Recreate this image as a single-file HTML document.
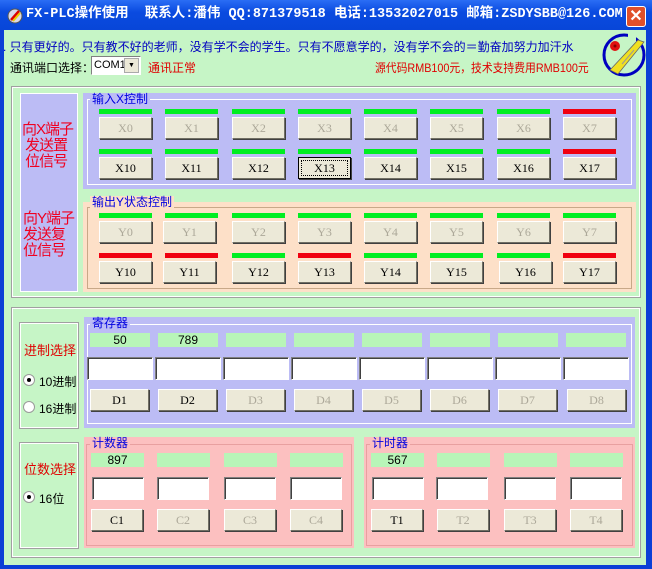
<!DOCTYPE html>
<html><head><meta charset="utf-8"><style>
*{margin:0;padding:0;box-sizing:border-box}
body{width:652px;height:569px;overflow:hidden;background:#0b3fd6;font-family:"Liberation Sans","Noto Sans CJK SC",sans-serif;position:relative}
.a{position:absolute}
#title{left:0;top:0;width:652px;height:30px;background:linear-gradient(#2a6df5,#0a4be0 40%,#0846d8);color:#fff;font:bold 13.5px "Liberation Mono","Noto Sans CJK SC",monospace;line-height:30px;white-space:nowrap}
#client{left:4px;top:30px;width:642px;height:535px;background:#c6f5c6}
.b{position:absolute;width:53px;height:22px;background:#ece9d8;border:1px solid;border-color:#fff #716f64 #716f64 #fff;box-shadow:1px 1px 0 #404040;font:12px "Liberation Serif","Noto Serif CJK SC",serif;text-align:center;line-height:20px;color:#000}
.d{color:#aca899}
.g{position:absolute;height:5px;background:#00ee22}
.r{position:absolute;height:5px;background:#f00010}
.gt{position:absolute;font:12px "Liberation Sans","Noto Sans CJK SC",sans-serif;color:#0000e0;padding:0 2px;line-height:13px}
.fr{position:absolute;border:1px solid #fff;outline:1px solid #a0a0a0}
.v{position:absolute;height:14px;background:#b8f5b8;font:12px "Liberation Sans",sans-serif;text-align:center;line-height:14px}
.t{position:absolute;height:23px;background:#fff;border:1px solid;border-color:#808080 #fff #fff #808080;box-shadow:inset 1px 1px 0 #404040}
.rad{position:absolute;width:12px;height:12px;border-radius:50%;background:#fff;border:1px solid #9a9a9a}
.rad.on::after{content:"";position:absolute;left:3px;top:3px;width:4px;height:4px;border-radius:50%;background:#000}
.lbl{position:absolute;font:12px "Liberation Sans","Noto Sans CJK SC",sans-serif;white-space:nowrap}
</style></head><body>
<div id="title" class="a">
<svg class="a" style="left:7px;top:8px" width="16" height="16" viewBox="0 0 16 16"><circle cx="8" cy="8" r="7" fill="#d8d8e8" stroke="#555"/><path d="M4 12 L12 3" stroke="#d00" stroke-width="2.5"/><path d="M6 13 L13 5" stroke="#ec0" stroke-width="2"/></svg>
<span class="a" style="left:26px;top:0">FX-PLC操作使用&nbsp; 联系人:潘伟 QQ:871379518 电话:13532027015 邮箱:ZSDYSBB@126.COM</span>
<div class="a" style="left:626px;top:6px;width:20px;height:21px;background:#e0502a;border:1px solid #fff;border-radius:3px;color:#fff;font:bold 16px 'Liberation Sans';text-align:center;line-height:19px">✕</div>
</div>
<div id="client" class="a"></div>
<div class="lbl" style="left:3px;top:38px;font-size:12px;color:#0000c0">. 只有更好的。只有教不好的老师，没有学不会的学生。只有不愿意学的，没有学不会的＝勤奋加努力加汗水</div>
<div class="lbl" style="left:10px;top:59px;font-size:12px">通讯端口选择：</div>
<div class="a" style="left:91px;top:56px;width:50px;height:19px;background:#fff;border:1px solid;border-color:#808080 #fff #fff #808080;font:11px 'Liberation Sans';line-height:17px;padding-left:2px">COM1<div class="a" style="right:1px;top:1px;width:15px;height:15px;background:#ece9d8;border:1px solid #aaa;font-size:7px;text-align:center;line-height:14px">▼</div></div>
<div class="lbl" style="left:148px;top:59px;font-size:12px;color:#e00000">通讯正常</div>
<div class="lbl" style="left:375px;top:59px;font-size:12px;color:#e00000;transform:scaleX(0.9);transform-origin:0 0">源代码RMB100元，技术支持费用RMB100元</div>
<svg class="a" style="left:600px;top:30px" width="48" height="50" viewBox="0 0 48 50"><circle cx="24" cy="25" r="20" fill="none" stroke="#0000c0" stroke-width="3"/><rect x="28" y="3" width="8" height="8" fill="#c6f5c6"/><circle cx="15" cy="16" r="5" fill="#e01010"/><circle cx="15" cy="16" r="1.5" fill="#800"/><path d="M10 40 L38 10 L44 12 L18 44 Z" fill="#f0e020" stroke="#666" stroke-width="0.8"/><path d="M22 34 L34 20" stroke="#999" stroke-width="1"/></svg>

<div class="fr" style="left:12px;top:87px;width:628px;height:210px"></div>
<div class="a" style="left:20px;top:93px;width:58px;height:199px;background:#bcbcf5;border:1px solid #fff"></div>
<div class="lbl" style="left:22px;top:122px;color:#f00020;font-size:15px;line-height:16px;letter-spacing:-1px">向X端子<br>&nbsp;发送置<br>&nbsp;位信号</div>
<div class="lbl" style="left:23px;top:211px;color:#f00020;font-size:15px;line-height:16px;letter-spacing:-1px">向Y端子<br>发送复<br>位信号</div>
<div class="a" style="left:83px;top:93px;width:553px;height:96px;background:#bcbcf5"></div>
<div class="fr" style="left:87px;top:99px;width:545px;height:86px;outline:none;border-color:#fff"></div>
<div class="gt" style="left:90px;top:93px;background:#bcbcf5">输入X控制</div>
<div class="a" style="left:83px;top:202px;width:553px;height:90px;background:#fde0c8"></div>
<div class="fr" style="left:87px;top:207px;width:545px;height:82px;outline:none;border-color:#c8a888"></div>
<div class="gt" style="left:90px;top:196px;background:#fde0c8">输出Y状态控制</div>

<div class="g" style="left:99px;top:109px;width:53px"></div><div class="b d" style="left:99px;top:117px">X0</div>
<div class="g" style="left:165px;top:109px;width:53px"></div><div class="b d" style="left:165px;top:117px">X1</div>
<div class="g" style="left:232px;top:109px;width:53px"></div><div class="b d" style="left:232px;top:117px">X2</div>
<div class="g" style="left:298px;top:109px;width:53px"></div><div class="b d" style="left:298px;top:117px">X3</div>
<div class="g" style="left:364px;top:109px;width:53px"></div><div class="b d" style="left:364px;top:117px">X4</div>
<div class="g" style="left:430px;top:109px;width:53px"></div><div class="b d" style="left:430px;top:117px">X5</div>
<div class="g" style="left:497px;top:109px;width:53px"></div><div class="b d" style="left:497px;top:117px">X6</div>
<div class="r" style="left:563px;top:109px;width:53px"></div><div class="b d" style="left:563px;top:117px">X7</div>

<div class="g" style="left:99px;top:149px;width:53px"></div><div class="b" style="left:99px;top:157px">X10</div>
<div class="g" style="left:165px;top:149px;width:53px"></div><div class="b" style="left:165px;top:157px">X11</div>
<div class="g" style="left:232px;top:149px;width:53px"></div><div class="b" style="left:232px;top:157px">X12</div>
<div class="g" style="left:298px;top:149px;width:53px"></div><div class="b" style="left:298px;top:157px;border:1px solid #000;outline:1px dotted #000;outline-offset:-4px">X13</div>
<div class="g" style="left:364px;top:149px;width:53px"></div><div class="b" style="left:364px;top:157px">X14</div>
<div class="g" style="left:430px;top:149px;width:53px"></div><div class="b" style="left:430px;top:157px">X15</div>
<div class="g" style="left:497px;top:149px;width:53px"></div><div class="b" style="left:497px;top:157px">X16</div>
<div class="r" style="left:563px;top:149px;width:53px"></div><div class="b" style="left:563px;top:157px">X17</div>

<div class="g" style="left:99px;top:213px;width:53px"></div><div class="b d" style="left:99px;top:221px">Y0</div>
<div class="g" style="left:165px;top:213px;width:53px"></div><div class="b d" style="left:163px;top:221px">Y1</div>
<div class="g" style="left:232px;top:213px;width:53px"></div><div class="b d" style="left:232px;top:221px">Y2</div>
<div class="g" style="left:298px;top:213px;width:53px"></div><div class="b d" style="left:298px;top:221px">Y3</div>
<div class="g" style="left:364px;top:213px;width:53px"></div><div class="b d" style="left:364px;top:221px">Y4</div>
<div class="g" style="left:430px;top:213px;width:53px"></div><div class="b d" style="left:430px;top:221px">Y5</div>
<div class="g" style="left:497px;top:213px;width:53px"></div><div class="b d" style="left:497px;top:221px">Y6</div>
<div class="g" style="left:563px;top:213px;width:53px"></div><div class="b d" style="left:563px;top:221px">Y7</div>

<div class="r" style="left:99px;top:253px;width:53px"></div><div class="b" style="left:99px;top:261px">Y10</div>
<div class="r" style="left:165px;top:253px;width:53px"></div><div class="b" style="left:163px;top:261px">Y11</div>
<div class="g" style="left:232px;top:253px;width:53px"></div><div class="b" style="left:232px;top:261px">Y12</div>
<div class="r" style="left:298px;top:253px;width:53px"></div><div class="b" style="left:298px;top:261px">Y13</div>
<div class="g" style="left:364px;top:253px;width:53px"></div><div class="b" style="left:364px;top:261px">Y14</div>
<div class="g" style="left:430px;top:253px;width:53px"></div><div class="b" style="left:430px;top:261px">Y15</div>
<div class="g" style="left:497px;top:253px;width:53px"></div><div class="b" style="left:499px;top:261px">Y16</div>
<div class="r" style="left:563px;top:253px;width:53px"></div><div class="b" style="left:563px;top:261px">Y17</div>

<div class="fr" style="left:12px;top:308px;width:628px;height:249px"></div>
<div class="fr" style="left:20px;top:323px;width:58px;height:105px"></div>
<div class="lbl" style="left:24px;top:340px;color:#e00000;font-size:13px">进制选择</div>
<div class="rad on" style="left:23px;top:374px"></div><div class="lbl" style="left:39px;top:373px">10进制</div>
<div class="rad" style="left:23px;top:401px"></div><div class="lbl" style="left:39px;top:400px">16进制</div>
<div class="fr" style="left:20px;top:443px;width:58px;height:105px"></div>
<div class="lbl" style="left:24px;top:459px;color:#e00000;font-size:13px">位数选择</div>
<div class="rad on" style="left:23px;top:491px"></div><div class="lbl" style="left:39px;top:490px">16位</div>

<div class="a" style="left:84px;top:317px;width:551px;height:111px;background:#bcbcf5"></div>
<div class="fr" style="left:87px;top:324px;width:545px;height:100px;outline:none"></div>
<div class="gt" style="left:90px;top:317px;background:#bcbcf5">寄存器</div>
<div class="v" style="left:90px;top:333px;width:60px">50</div>
<div class="v" style="left:158px;top:333px;width:60px">789</div>
<div class="v" style="left:226px;top:333px;width:60px"></div>
<div class="v" style="left:294px;top:333px;width:60px"></div>
<div class="v" style="left:362px;top:333px;width:60px"></div>
<div class="v" style="left:430px;top:333px;width:60px"></div>
<div class="v" style="left:498px;top:333px;width:60px"></div>
<div class="v" style="left:566px;top:333px;width:60px"></div>
<div class="t" style="left:87px;top:357px;width:66px"></div>
<div class="t" style="left:155px;top:357px;width:66px"></div>
<div class="t" style="left:223px;top:357px;width:66px"></div>
<div class="t" style="left:291px;top:357px;width:66px"></div>
<div class="t" style="left:359px;top:357px;width:66px"></div>
<div class="t" style="left:427px;top:357px;width:66px"></div>
<div class="t" style="left:495px;top:357px;width:66px"></div>
<div class="t" style="left:563px;top:357px;width:66px"></div>
<div class="b" style="left:90px;top:389px;width:59px">D1</div>
<div class="b" style="left:158px;top:389px;width:59px">D2</div>
<div class="b d" style="left:226px;top:389px;width:59px">D3</div>
<div class="b d" style="left:294px;top:389px;width:59px">D4</div>
<div class="b d" style="left:362px;top:389px;width:59px">D5</div>
<div class="b d" style="left:430px;top:389px;width:59px">D6</div>
<div class="b d" style="left:498px;top:389px;width:59px">D7</div>
<div class="b d" style="left:567px;top:389px;width:59px">D8</div>

<div class="a" style="left:84px;top:437px;width:270px;height:111px;background:#fcc0c0"></div>
<div class="fr" style="left:86px;top:444px;width:266px;height:102px;outline:none;border-color:#e8a0a0"></div>
<div class="gt" style="left:90px;top:437px;background:#fcc0c0">计数器</div>
<div class="a" style="left:364px;top:437px;width:271px;height:111px;background:#fcc0c0"></div>
<div class="fr" style="left:366px;top:444px;width:267px;height:102px;outline:none;border-color:#e8a0a0"></div>
<div class="gt" style="left:370px;top:437px;background:#fcc0c0">计时器</div>

<div class="v" style="left:91px;top:453px;width:53px">897</div>
<div class="v" style="left:157px;top:453px;width:53px"></div>
<div class="v" style="left:224px;top:453px;width:53px"></div>
<div class="v" style="left:290px;top:453px;width:53px"></div>
<div class="t" style="left:92px;top:477px;width:52px"></div>
<div class="t" style="left:157px;top:477px;width:52px"></div>
<div class="t" style="left:224px;top:477px;width:52px"></div>
<div class="t" style="left:290px;top:477px;width:52px"></div>
<div class="b" style="left:91px;top:509px;width:52px">C1</div>
<div class="b d" style="left:157px;top:509px;width:52px">C2</div>
<div class="b d" style="left:224px;top:509px;width:52px">C3</div>
<div class="b d" style="left:290px;top:509px;width:52px">C4</div>

<div class="v" style="left:371px;top:453px;width:53px">567</div>
<div class="v" style="left:437px;top:453px;width:53px"></div>
<div class="v" style="left:504px;top:453px;width:53px"></div>
<div class="v" style="left:570px;top:453px;width:53px"></div>
<div class="t" style="left:372px;top:477px;width:52px"></div>
<div class="t" style="left:436px;top:477px;width:52px"></div>
<div class="t" style="left:504px;top:477px;width:52px"></div>
<div class="t" style="left:570px;top:477px;width:52px"></div>
<div class="b" style="left:371px;top:509px;width:52px">T1</div>
<div class="b d" style="left:437px;top:509px;width:52px">T2</div>
<div class="b d" style="left:504px;top:509px;width:52px">T3</div>
<div class="b d" style="left:570px;top:509px;width:52px">T4</div>
</body></html>
